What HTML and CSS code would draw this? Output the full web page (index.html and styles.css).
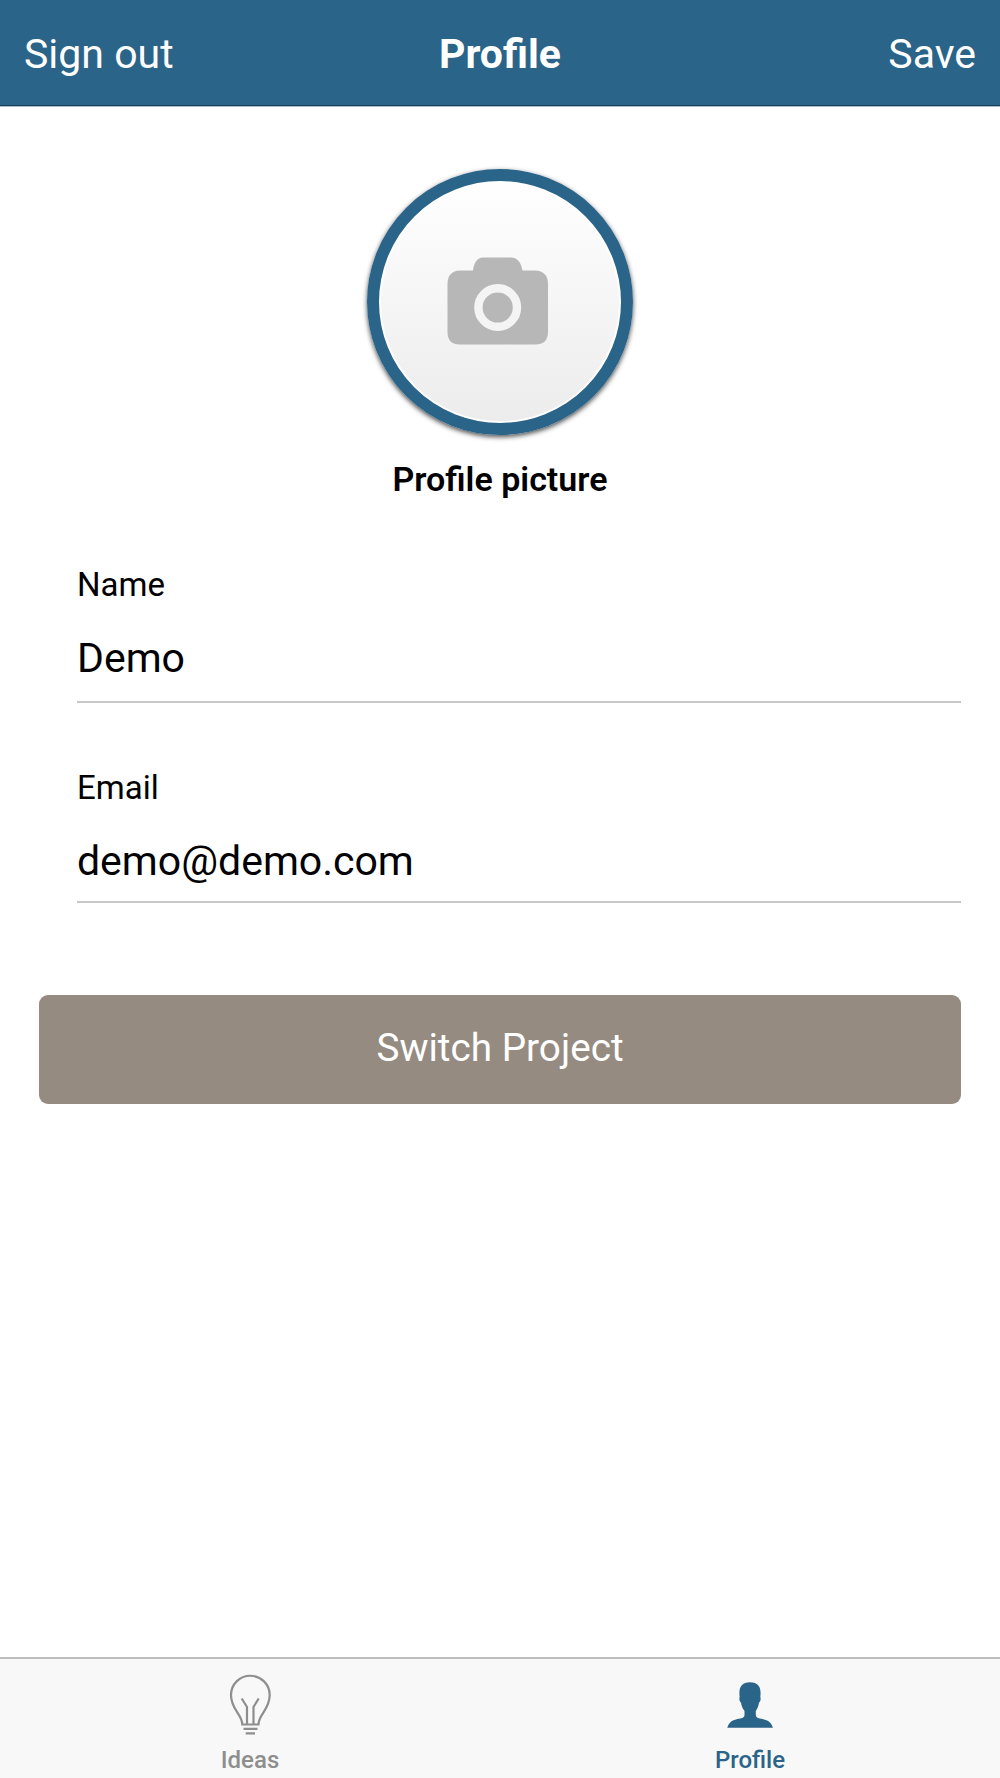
FILE: index.html
```html
<!DOCTYPE html>
<html>
    <head>
        <meta charset="utf-8">
        <meta name="viewport" content="width=device-width, initial-scale=1.0">
        <title>Profile</title>
        <link rel="stylesheet" href="styles.css">
    </head>
    <body>
        <header class="navbar">
            <a class="nav-left">Sign out</a>
            <h1 class="nav-title">Profile</h1>
            <a class="nav-right">Save</a>
        </header>
        <main class="content">
            <div class="picture">
                <div class="avatar">
                    <svg class="camera" viewBox="0 0 101 88" width="101" height="88">
                        <path fill="#b7b7b7" d="M13 13.500H26C27 6 30 0.500 36 0.500H64C71 0.500 74 6 75.500 13.500H88Q101 14 101 27V75Q101 87.500 88 87.500H13Q0.500 87.500 0.500 75V27Q0.500 14 13 13.500Z"/>
                        <circle cx="50.700" cy="50.500" r="19.300" fill="none" stroke="#f4f4f4" stroke-width="8.400"/>
                    </svg>
                </div>
                <p class="caption">Profile picture</p>
            </div>
            <div class="field">
                <div class="label">Name</div>
                <div class="value">Demo</div>
            </div>
            <div class="field email">
                <div class="label">Email</div>
                <div class="value">demo@demo.com</div>
            </div>
            <a class="button">Switch Project</a>
        </main>
        <nav class="tabbar">
            <a class="tab">
                <svg class="icon" viewBox="0 0 50 66" width="50" height="66" fill="none" stroke="#8e8e8e" stroke-width="2.2">
                    <path d="M17.300 51.500C17.300 41 6 37 6 22A19.300 19.200 0 0 1 44.700 22C44.700 37 33.500 41 33.500 51.500Z"/>
                    <path d="M16.700 25.500L22 34V51.500M33.700 25.500L28.500 34V51.500"/>
                    <path d="M18.500 55.800H32.500M20.700 60.300H30"/>
                </svg>
                <span class="tab-label">Ideas</span>
            </a>
            <a class="tab active">
                <svg class="icon" viewBox="0 0 50 66" width="50" height="66">
                    <path fill="#2a6488" d="M2.300 54.700C3.500 50 6.500 47.500 11 46.400C14.500 45.500 19.500 45.500 19.500 42V38C17.500 35.500 16.300 32.500 16 29.500C14.500 29 14 25.500 14.700 24C13.500 15 16 9.200 25 9.200C34 9.200 36.500 15 35.300 24C36 25.500 35.500 29 34 29.500C33.700 32.500 32.500 35.500 30.800 38V42C30.800 45.500 35.500 45.500 39 46.400C43.500 47.500 46.800 50 47.900 54.700Z"/>
                </svg>
                <span class="tab-label">Profile</span>
            </a>
        </nav>
    </body>
</html>
```
FILE: styles.css
```css
* { box-sizing: border-box; }
body {
	margin: 0;
	height: 1778px;
	display: flex;
	flex-direction: column;
	font-family: Roboto, sans-serif;
	color: #000;
	background: #fff;
}

.navbar {
	display: grid;
	grid-template-columns: 1fr 1fr 1fr;
	height: 106px;
	padding: 0 24px;
	line-height: 108px;
	font-size: 41px;
	color: #fff;
	background: #2b6489;
	border-bottom: 1px solid #123f60;
	box-shadow: 0 1px 0 #aebfcc;
}
.nav-title { margin: 0; font-size: 41px; font-weight: bold; text-align: center; }
.nav-right { text-align: right; }

.content { flex: 1; padding: 63px 39px 0; }

.picture { display: flex; flex-direction: column; align-items: center; }
.avatar {
	display: flex;
	width: 266px;
	height: 266px;
	padding: 76px 0 0 68px;
	border: 12px solid #2a6489;
	border-radius: 50%;
	background: linear-gradient(#fff, #ececec);
	box-shadow: inset 0 0 0 2px #fff, 0 2px 5px rgba(0, 0, 0, 0.7);
}
.caption { margin: 24px 0 0; font-size: 34px; line-height: 40px; font-weight: 600; }

.field {
	margin: 66px 0 0 38px;
	border-bottom: 2px solid #c7c6cc;
}
.label { font-size: 33px; line-height: 40px; }
.value { margin-top: 20px; height: 76px; font-size: 41px; line-height: 67px; }
.email { margin-top: 65px; }
.email .value { height: 73px; }

.button {
	display: block;
	margin-top: 92px;
	height: 109px;
	font-size: 38.7px;
	line-height: 105px;
	text-align: center;
	color: #fff;
	background: #958b81;
	border-radius: 9px;
}

.tabbar {
	display: flex;
	height: 121px;
	background: #f8f8f8;
	border-top: 2px solid #bebebe;
}
.tab {
	flex: 1;
	display: flex;
	flex-direction: column;
	align-items: center;
	padding-top: 14px;
	color: #8e8e8e;
}
.tab-label { margin-top: 6px; font-size: 24px; line-height: 30px; font-weight: 500; }
.active { color: #2a6488; }
```
